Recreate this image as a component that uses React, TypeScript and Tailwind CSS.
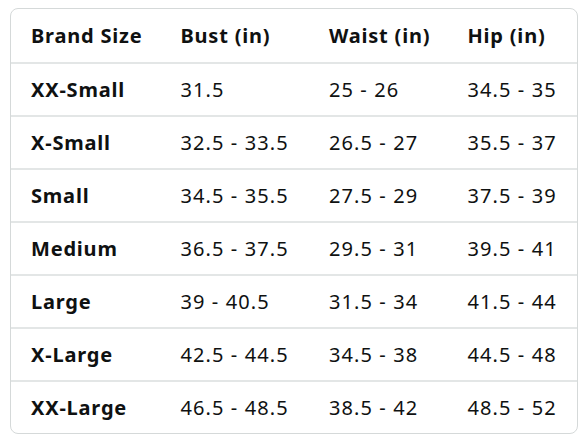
import React from 'react';

const rows = [
  ['XX-Small', '31.5', '25 - 26', '34.5 - 35'],
  ['X-Small', '32.5 - 33.5', '26.5 - 27', '35.5 - 37'],
  ['Small', '34.5 - 35.5', '27.5 - 29', '37.5 - 39'],
  ['Medium', '36.5 - 37.5', '29.5 - 31', '39.5 - 41'],
  ['Large', '39 - 40.5', '31.5 - 34', '41.5 - 44'],
  ['X-Large', '42.5 - 44.5', '34.5 - 38', '44.5 - 48'],
  ['XX-Large', '46.5 - 48.5', '38.5 - 42', '48.5 - 52'],
];

const cols = ['w-[150px]', 'w-[149px]', 'w-[139px]', 'w-[130px]'];

const App = () => {
  return (
    <div className="w-[588px] h-[441px] bg-white pt-[8px] pl-[10px]" style={{ fontFamily: '"Noto Sans", sans-serif' }}>
      <div className="w-[568px] border border-[#d5d9d9] rounded-[8px] overflow-hidden text-[20px] text-[#0f1111]">
        {/* Header */}
        <div className="flex h-[53px] items-center font-bold tracking-[0.04em]">
          {['Brand Size', 'Bust (in)', 'Waist (in)', 'Hip (in)'].map((h, i) => (
            <div key={h} className={`${cols[i]} pl-[20px]`}>{h}</div>
          ))}
        </div>
        {rows.map((r) => (
          <div key={r[0]} className="flex h-[53px] items-center border-t-2 border-[#e3e6e6]">
            {r.map((c, i) => (
              <div
                key={i}
                className={`${cols[i]} pl-[20px] ${i === 0 ? 'font-bold tracking-[0.04em]' : 'tracking-[0.055em]'}`}
              >
                {c}
              </div>
            ))}
          </div>
        ))}
      </div>
    </div>
  );
};

export default App;
